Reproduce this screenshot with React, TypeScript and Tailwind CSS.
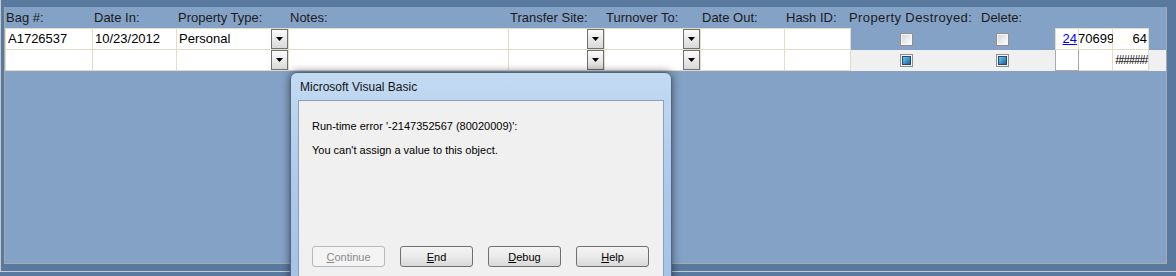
import React from 'react';

const cols = [
  { label: 'Bag #:', w: 'w-[88px]', value: 'A1726537' },
  { label: 'Date In:', w: 'w-[84px]', value: '10/23/2012' },
  { label: 'Property Type:', w: 'w-[112px]', value: 'Personal', combo: true },
  { label: 'Notes:', w: 'w-[220px]', value: '' },
  { label: 'Transfer Site:', w: 'w-[96px]', value: '', combo: true },
  { label: 'Turnover To:', w: 'w-[96px]', value: '', combo: true },
  { label: 'Date Out:', w: 'w-[84px]', value: '' },
  { label: 'Hash ID:', w: 'w-[66px]', value: '' },
];

function ComboButton() {
  return (
    <div className="flex h-full w-[17px] shrink-0 items-start justify-center border border-[#707070] bg-linear-to-b from-[#fbfbfb] to-[#d9d9d9] pt-[7px]">
      <svg width="7" height="4" viewBox="0 0 7 4">
        <path d="M0 0h7L3.5 4z" fill="#000" />
      </svg>
    </div>
  );
}

function Check({ filled }: { filled?: boolean }) {
  return (
    <div className="h-[13px] w-[13px] border border-[#8f8f8f] bg-[#f6f6f6] p-[1px]">
      {filled ? (
        <div className="h-full w-full border border-[#1d4d70] bg-linear-to-br from-[#74c6ee] to-[#1766a0]" />
      ) : (
        <div className="h-full w-full bg-linear-to-br from-[#d6d6d6] to-[#fdfdfd]" />
      )}
    </div>
  );
}

function DataRow({ first }: { first?: boolean }) {
  const edge = first ? 'border-t border-b' : 'border-b';
  const h = first ? 'h-[22px]' : 'h-[21px]';
  return (
    <div className={`flex ${h}`}>
      {cols.map((c, i) => (
        <div
          key={c.label}
          className={`${c.w} ${edge} ${i === 0 ? 'border-l' : ''} flex items-center border-r border-[#e2ddc6] bg-white`}
        >
          <span className="flex-1 truncate pl-[2px]">{first ? c.value : ''}</span>
          {c.combo && <ComboButton />}
        </div>
      ))}
      <div className={`flex w-[204px] items-center ${first ? '' : 'bg-[#f0f0f0]'}`}>
        <div className="w-[130px] pl-[49px]">
          <Check filled={!first} />
        </div>
        <div className="w-[74px] pl-[15px]">
          <Check filled={!first} />
        </div>
      </div>
      <div
        className={`flex w-[24px] items-center justify-end border-l border-r ${edge} ${first ? 'border-[#e2ddc6] bg-white' : 'border-[#a9a9a9] bg-white'}`}
      >
        {first && <span className="pr-px text-[#0000ff] underline">24</span>}
      </div>
      <div className={`flex w-[34px] items-center border-r ${edge} border-[#e2ddc6] bg-white`}>
        {first && <span className="-ml-[1px]">70699</span>}
      </div>
      <div className={`flex w-[36px] items-center justify-end border-r ${edge} border-[#e2ddc6] bg-white`}>
        {first ? (
          <span className="pr-[1px]">64</span>
        ) : (
          <span className="pr-[1px] text-[12px] tracking-[-1.4px]">######</span>
        )}
      </div>
      <div className={`w-[17px] ${first ? '' : 'bg-[#f0f0f0]'}`} />
    </div>
  );
}

function DlgButton({ k, rest, disabled }: { k: string; rest: string; disabled?: boolean }) {
  return (
    <div
      className={`flex h-[21px] w-[73px] items-center justify-center rounded-[3px] border ${
        disabled
          ? 'border-[#b5b9bd] bg-[#f4f4f4] text-[#8a8a8a]'
          : 'border-[#707070] bg-linear-to-b from-[#f3f3f3] via-[#ebebeb] to-[#d8d8d8] text-black'
      }`}
    >
      <span className="underline">{k}</span>
      {rest}
    </div>
  );
}

export default function App() {
  return (
    <div className="relative h-[276px] w-[1176px] overflow-hidden bg-[#5a799f] font-['Liberation_Sans',Arial,sans-serif] text-[13px] text-black">
      <div className="h-[272px] border-b border-l border-[#c5cad0] pb-[7px] pl-[3px] pt-[7px]">
        <div className="h-full w-[1163px] border-b border-l border-r border-[#a7a9ab] bg-[#84a2c6]">
          {/* header labels */}
          <div className="flex h-[21px] items-center text-[#1b1b1b]">
            {cols.map((c) => (
              <div key={c.label} className={`${c.w} pl-[1px]`}>
                {c.label}
              </div>
            ))}
            <div className="-ml-[2px] w-[132px] tracking-[0.4px]">Property Destroyed:</div>
            <div>Delete:</div>
          </div>
          <DataRow first />
          <DataRow />
        </div>
      </div>

      {/* VBA error dialog */}
      <div className="absolute left-[290px] top-[72px] h-[230px] w-[382px] rounded-t-[7px] border border-[#53667f] bg-linear-to-b from-[#c3daf2] via-[#acc9ea] to-[#a3c2e6] shadow-[0_0_9px_rgba(0,0,0,0.55)]">
        <div className="flex h-[27px] items-center pl-[9px] text-[12px] text-[#141414]">
          Microsoft Visual Basic
        </div>
        <div className="mx-[7px] h-[200px] border border-[#8c9fb6] bg-[#f0f0f0] pl-[13px] text-[11px] leading-[14px]">
          <p className="mt-[18px]">Run-time error '-2147352567 (80020009)':</p>
          <p className="mt-[10px]">You can't assign a value to this object.</p>
          <div className="mt-[89px] flex gap-[15px]">
            <DlgButton k="C" rest="ontinue" disabled />
            <DlgButton k="E" rest="nd" />
            <DlgButton k="D" rest="ebug" />
            <DlgButton k="H" rest="elp" />
          </div>
        </div>
      </div>
    </div>
  );
}
